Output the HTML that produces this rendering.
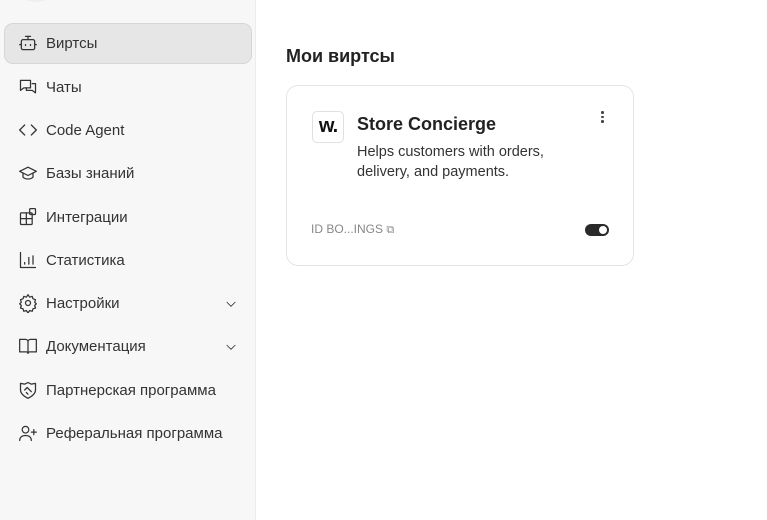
<!DOCTYPE html>
<html><head><meta charset="utf-8"><style>
*{box-sizing:border-box;margin:0;padding:0}
body{width:767px;height:520px;background:#fff;font-family:"Liberation Sans",sans-serif;position:relative;overflow:hidden;color:#222}
.side{position:absolute;left:0;top:0;width:256px;height:520px;background:#f7f7f7;border-right:1px solid #ececec}
.item{position:absolute;left:4px;width:248px;height:41px;display:flex;align-items:center;padding-left:14px;font-size:15px;color:#333}
.item svg{width:20px;height:20px;margin-right:8px;margin-top:-2px;fill:none;stroke:#333;stroke-width:1.5;stroke-linecap:round;stroke-linejoin:round}
.item.act{background:#e6e6e6;border:1px solid #d6d6d6;border-radius:9px;padding-left:13px}
.chev{position:absolute;right:14px;width:14px!important;height:14px!important;margin:0!important}
h2{position:absolute;left:286px;top:46px;font-size:18px;font-weight:bold;color:#222}
.card{position:absolute;left:286px;top:85px;width:348px;height:181px;border:1px solid #e4e4e4;border-radius:12px;background:#fff}
.logo{position:absolute;left:25px;top:25px;width:32px;height:32px;border:1px solid #e0e0e0;border-radius:5px;font-weight:bold;font-size:20px;text-align:center;line-height:28px;color:#111;letter-spacing:-1px}
.t{position:absolute;left:70px;top:28px;font-size:18px;font-weight:bold;color:#222}
.d{position:absolute;left:70px;top:56px;font-size:14.5px;line-height:20px;color:#333;width:220px}
.id{position:absolute;left:24px;top:136px;font-size:12px;color:#888}
.tog{position:absolute;left:298px;top:138px;width:24px;height:12px;border-radius:6px;background:#2a2a2a}
.tog:after{content:"";position:absolute;right:2px;top:2px;width:8px;height:8px;border-radius:50%;background:#fff}
.dots{position:absolute;left:314px;top:25px;width:3px}
.dots i{display:block;width:2.5px;height:2.5px;background:#444;border-radius:50%;margin-bottom:2px}
</style></head><body>
<div class="side">
<div style="position:absolute;left:22px;top:-14px;width:28px;height:16px;border-radius:50%;background:#eee"></div>
<div class="item act" style="top:23px"><svg viewBox="0 0 24 24"><rect x="4" y="8" width="16" height="12" rx="2"/><path d="M12 8V4M9 4h6M2 14h2M20 14h2M9 14v1M15 14v1"/></svg>Виртсы</div>
<div class="item" style="top:67px"><svg viewBox="0 0 24 24"><path d="M3 4h12v9H7l-4 3z"/><path d="M17 8h4v11l-4-3h-7v-3"/></svg>Чаты</div>
<div class="item" style="top:110px"><svg viewBox="0 0 24 24"><path d="M8 6l-6 6 6 6M16 6l6 6-6 6"/></svg>Code Agent</div>
<div class="item" style="top:153px"><svg viewBox="0 0 24 24"><path d="M2 10l10-5 10 5-10 5z"/><path d="M6 12v5c3 3 9 3 12 0v-5"/></svg>Базы знаний</div>
<div class="item" style="top:197px"><svg viewBox="0 0 24 24"><rect x="3" y="7" width="14" height="14" rx="1"/><path d="M3 14h14M10 7v14"/><rect x="14" y="2" width="7" height="7" rx="1"/></svg>Интеграции</div>
<div class="item" style="top:240px"><svg viewBox="0 0 24 24"><path d="M3 3v18h18M8 17v-2M13 17V9M18 17V7"/></svg>Статистика</div>
<div class="item" style="top:283px"><svg viewBox="0 0 24 24"><circle cx="12" cy="12" r="3"/><path d="M12 2l2 3 3-1 1 3 3 1-1 3 2 2-2 2 1 3-3 1-1 3-3-1-2 3-2-3-3 1-1-3-3-1 1-3-2-2 2-2-1-3 3-1 1-3 3 1z"/></svg>Настройки<svg class="chev" viewBox="0 0 24 24"><path d="M5 9l7 7 7-7"/></svg></div>
<div class="item" style="top:326px"><svg viewBox="0 0 24 24"><path d="M2 4h7a3 3 0 013 3v14a2 2 0 00-2-2H2zM22 4h-7a3 3 0 00-3 3v14a2 2 0 012-2h8z"/></svg>Документация<svg class="chev" viewBox="0 0 24 24"><path d="M5 9l7 7 7-7"/></svg></div>
<div class="item" style="top:370px"><svg viewBox="0 0 24 24"><path d="M3 4l5 1 4-2 4 2 5-1v8c0 5-5 8-9 10-4-2-9-5-9-10z"/><path d="M8 12l3-3 5 5M10 15l2 2"/></svg>Партнерская программа</div>
<div class="item" style="top:413px"><svg viewBox="0 0 24 24"><circle cx="9" cy="8" r="4"/><path d="M2 21c0-4 3-6 7-6s7 2 7 6M19 8v6M16 11h6"/></svg>Реферальная программа</div>
</div>
<h2>Мои виртсы</h2>
<div class="card">
<div class="logo">w.</div>
<div class="t">Store Concierge</div>
<div class="d">Helps customers with orders, delivery, and payments.</div>
<div class="dots"><i></i><i></i><i></i></div>
<div class="id">ID BO...INGS <span style="font-size:11px">⧉</span></div>
<div class="tog"></div>
</div>
</body></html>
